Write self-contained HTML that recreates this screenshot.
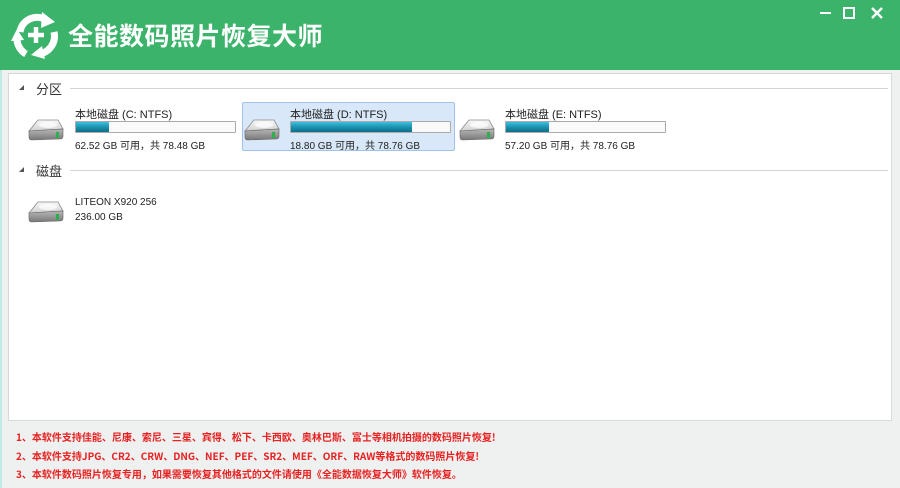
<!DOCTYPE html>
<html><head><meta charset="utf-8"><style>
*{margin:0;padding:0;box-sizing:border-box}
body{width:900px;height:488px;overflow:hidden;background:#eef1f0;font-family:"Liberation Sans","Noto Sans CJK SC",sans-serif;position:relative}
.hdr{position:absolute;left:0;top:0;width:900px;height:70px;background:#3cb36b}
.title{position:absolute;left:68px;top:17px;color:#fff;font-size:25px;font-weight:bold;letter-spacing:0.5px;font-family:"Noto Sans CJK SC",sans-serif}
.lb{position:absolute;left:0;top:70px;width:2px;height:418px;background:#bfe9e4}
.panel{position:absolute;left:8px;top:73px;width:884px;height:348px;background:#fff;border:1px solid #d6d9d8}
.sec{position:absolute;left:36px;font-size:13px;color:#333;font-family:"Noto Sans CJK SC",sans-serif}
.tri{position:absolute;left:19px;width:0;height:0;border-left:5px solid transparent;border-bottom:5px solid #555}
.line{position:absolute;left:70px;right:12px;height:1px;background:#d4d4d4}
.drv{position:absolute;font-size:11px;color:#222}
.drv .n{position:absolute;left:0;top:0;white-space:nowrap}
.drv .s{position:absolute;left:0;top:31px;white-space:nowrap;font-size:10px}
.bar{position:absolute;left:0;top:15px;width:161px;height:12px;border:1px solid #aaa;background:#fafafa;border-radius:1px}
.bar i{display:block;height:100%;background:linear-gradient(#3ec0dc,#1c93b3 50%,#0e6d86)}
.sel{position:absolute;left:242px;top:102px;width:213px;height:49px;background:#d9e8f8;border:1px solid #9fc3ea;border-radius:2px}
.ic{position:absolute}
.tips{position:absolute;left:16px;font-size:10px;color:#e82020;font-weight:bold;white-space:nowrap;font-family:"Noto Sans CJK SC",sans-serif}
</style></head><body>
<div class="hdr">
<svg style="position:absolute;left:11px;top:11px" width="50" height="50" viewBox="0 0 50 50">
<path d="M9 21 A17 17 0 0 1 35 9" stroke="#fff" stroke-width="7" fill="none"/>
<polygon points="31,1 44,11 30,17" fill="#fff"/>
<path d="M43 21 A18 18 0 0 1 28 43" stroke="#fff" stroke-width="7" fill="none"/>
<polygon points="34,48 20,44 31,35" fill="#fff"/>
<path d="M15 43 A18 18 0 0 1 6 26" stroke="#fff" stroke-width="7" fill="none"/>
<polygon points="0,30 13,29 6,18" fill="#fff"/>
<path d="M25 16v16M17 24h16" stroke="#fff" stroke-width="4.5"/>
</svg>
<div class="title">全能数码照片恢复大师</div>
<div style="position:absolute;left:820px;top:12px;width:11px;height:2px;background:#fff"></div>
<div style="position:absolute;left:843px;top:7px;width:12px;height:12px;border:2px solid #fff"></div>
<svg style="position:absolute;left:871px;top:7px" width="12" height="12"><path d="M1 1L11 11M11 1L1 11" stroke="#fff" stroke-width="2.4"/></svg>
</div>
<div class="lb"></div>
<div class="panel"></div>
<div class="tri" style="top:85px"></div>
<div class="sec" style="top:79px">分区</div>
<div class="line" style="top:88px"></div>
<div class="tri" style="top:167px"></div>
<div class="sec" style="top:161px">磁盘</div>
<div class="line" style="top:170px"></div>
<div class="sel"></div>

<svg width="0" height="0" style="position:absolute"><defs>
<linearGradient id="tp" x1="0" y1="0" x2="0" y2="1"><stop offset="0" stop-color="#fafafa"/><stop offset="1" stop-color="#cfcfcf"/></linearGradient>
<linearGradient id="sd" x1="0" y1="0" x2="0" y2="1"><stop offset="0" stop-color="#b8b8b8"/><stop offset="1" stop-color="#777"/></linearGradient>
<g id="hd"><path d="M1 15 L10 4 L30 4 L35 13 Z" fill="url(#tp)" stroke="#8a8a8a" stroke-width="0.8"/>
<path d="M1 15 L35 13 L35 20 Q35 23 32 23 L4 24 Q1 24 1 21 Z" fill="url(#sd)" stroke="#666" stroke-width="0.6"/>
<ellipse cx="20" cy="9" rx="9" ry="3" fill="#fff" opacity=".7"/><rect x="28" y="16" width="3" height="6" fill="#2bb04a"/></g>
</defs></svg>

<svg class="ic" style="left:28px;top:116px" width="36" height="26"><use href="#hd"/></svg>
<div class="drv" style="left:75px;top:106px"><div class="n">本地磁盘 (C: NTFS)</div><div class="bar"><i style="width:21%"></i></div><div class="s">62.52 GB 可用，共 78.48 GB</div></div>
<svg class="ic" style="left:244px;top:116px" width="36" height="26"><use href="#hd"/></svg>
<div class="drv" style="left:290px;top:106px"><div class="n">本地磁盘 (D: NTFS)</div><div class="bar"><i style="width:76%"></i></div><div class="s">18.80 GB 可用，共 78.76 GB</div></div>
<svg class="ic" style="left:459px;top:116px" width="36" height="26"><use href="#hd"/></svg>
<div class="drv" style="left:505px;top:106px"><div class="n">本地磁盘 (E: NTFS)</div><div class="bar"><i style="width:27%"></i></div><div class="s">57.20 GB 可用，共 78.76 GB</div></div>

<svg class="ic" style="left:28px;top:198px" width="36" height="26"><use href="#hd"/></svg>
<div class="drv" style="left:75px;top:197px;font-size:10px"><div class="n">LITEON X920 256</div><div style="position:absolute;top:15px;white-space:nowrap">236.00 GB</div></div>

<div class="tips" style="top:429px">1、本软件支持佳能、尼康、索尼、三星、宾得、松下、卡西欧、奥林巴斯、富士等相机拍摄的数码照片恢复!</div>
<div class="tips" style="top:448px">2、本软件支持JPG、CR2、CRW、DNG、NEF、PEF、SR2、MEF、ORF、RAW等格式的数码照片恢复!</div>
<div class="tips" style="top:466px">3、本软件数码照片恢复专用，如果需要恢复其他格式的文件请使用《全能数据恢复大师》软件恢复。</div>
</body></html>
